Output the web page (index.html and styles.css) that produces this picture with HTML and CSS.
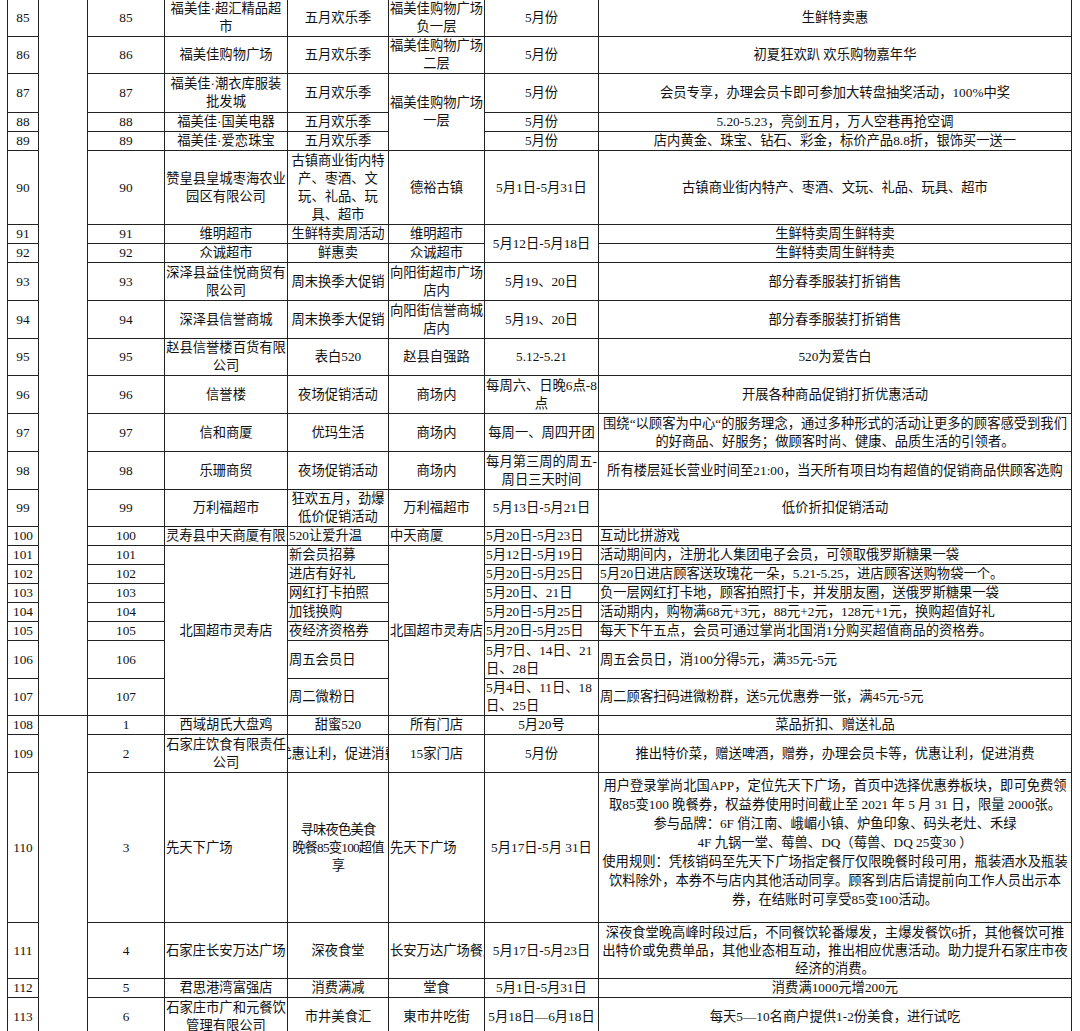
FILE: index.html
```html
<!DOCTYPE html>
<html lang="zh-CN">
<head>
<meta charset="utf-8">
<title>活动表</title>
<link rel="stylesheet" href="styles.css">
</head>
<body>
<table class="sheet">
<colgroup>
<col class="c1"><col class="c2"><col class="c3"><col class="c4"><col class="c5"><col class="c6"><col class="c7"><col class="c8">
</colgroup>
<tbody>
<tr class="h37"><td>85</td><td rowspan="23"></td><td>85</td><td>福美佳·超汇精品超<br>市</td><td>五月欢乐季</td><td>福美佳购物广场<br>负一层</td><td>5月份</td><td>生鲜特卖惠</td></tr>
<tr class="h37"><td>86</td><td>86</td><td>福美佳购物广场</td><td>五月欢乐季</td><td>福美佳购物广场<br>二层</td><td>5月份</td><td>初夏狂欢趴 欢乐购物嘉年华</td></tr>
<tr class="h39"><td>87</td><td>87</td><td>福美佳·潮衣库服装<br>批发城</td><td>五月欢乐季</td><td rowspan="3">福美佳购物广场<br>一层</td><td>5月份</td><td>会员专享，办理会员卡即可参加大转盘抽奖活动，100%中奖</td></tr>
<tr class="h19"><td>88</td><td>88</td><td>福美佳·国美电器</td><td>五月欢乐季</td><td>5月份</td><td>5.20-5.23，亮剑五月，万人空巷再抢空调</td></tr>
<tr class="h19"><td>89</td><td>89</td><td>福美佳·爱恋珠宝</td><td>五月欢乐季</td><td>5月份</td><td>店内黄金、珠宝、钻石、彩金，标价产品8.8折，银饰买一送一</td></tr>
<tr class="h74"><td>90</td><td>90</td><td>赞皇县皇城枣海农业<br>园区有限公司</td><td>古镇商业街内特<br>产、枣酒、文<br>玩、礼品、玩<br>具、超市</td><td>德裕古镇</td><td>5月1日-5月31日</td><td>古镇商业街内特产、枣酒、文玩、礼品、玩具、超市</td></tr>
<tr class="h19"><td>91</td><td>91</td><td>维明超市</td><td>生鲜特卖周活动</td><td>维明超市</td><td rowspan="2">5月12日-5月18日</td><td>生鲜特卖周生鲜特卖</td></tr>
<tr class="h19"><td>92</td><td>92</td><td>众诚超市</td><td>鲜惠卖</td><td>众诚超市</td><td>生鲜特卖周生鲜特卖</td></tr>
<tr class="h38"><td>93</td><td>93</td><td>深泽县益佳悦商贸有<br>限公司</td><td>周末换季大促销</td><td>向阳街超市广场<br>店内</td><td>5月19、20日</td><td>部分春季服装打折销售</td></tr>
<tr class="h38"><td>94</td><td>94</td><td>深泽县信誉商城</td><td>周末换季大促销</td><td>向阳街信誉商城<br>店内</td><td>5月19、20日</td><td>部分春季服装打折销售</td></tr>
<tr class="h37"><td>95</td><td>95</td><td>赵县信誉楼百货有限<br>公司</td><td>表白520</td><td>赵县自强路</td><td>5.12-5.21</td><td>520为爱告白</td></tr>
<tr class="h38"><td>96</td><td>96</td><td>信誉楼</td><td>夜场促销活动</td><td>商场内</td><td>每周六、日晚6点-8<br>点</td><td>开展各种商品促销打折优惠活动</td></tr>
<tr class="h38"><td>97</td><td>97</td><td>信和商厦</td><td>优玛生活</td><td>商场内</td><td>每周一、周四开团</td><td>围绕“以顾客为中心“的服务理念，通过多种形式的活动让更多的顾客感受到我们<br>的好商品、好服务；做顾客时尚、健康、品质生活的引领者。</td></tr>
<tr class="h38"><td>98</td><td>98</td><td>乐珊商贸</td><td>夜场促销活动</td><td>商场内</td><td>每月第三周的周五-<br>周日三天时间</td><td>所有楼层延长营业时间至21:00，当天所有项目均有超值的促销商品供顾客选购</td></tr>
<tr class="h37"><td>99</td><td>99</td><td>万利福超市</td><td>狂欢五月，劲爆<br>低价促销活动</td><td>万利福超市</td><td>5月13日-5月21日</td><td>低价折扣促销活动</td></tr>
<tr class="h19"><td>100</td><td>100</td><td class="l">灵寿县中天商厦有限公司</td><td class="l">520让爱升温</td><td class="l">中天商厦</td><td class="l">5月20日-5月23日</td><td class="l">互动比拼游戏</td></tr>
<tr class="h19"><td>101</td><td>101</td><td rowspan="7">北国超市灵寿店</td><td class="l">新会员招募</td><td rowspan="7">北国超市灵寿店</td><td class="l">5月12日-5月19日</td><td class="l">活动期间内，注册北人集团电子会员，可领取俄罗斯糖果一袋</td></tr>
<tr class="h19"><td>102</td><td>102</td><td class="l">进店有好礼</td><td class="l">5月20日-5月25日</td><td class="l">5月20日进店顾客送玫瑰花一朵，5.21-5.25，进店顾客送购物袋一个。</td></tr>
<tr class="h19"><td>103</td><td>103</td><td class="l">网红打卡拍照</td><td class="l">5月20日、21日</td><td class="l">负一层网红打卡地，顾客拍照打卡，并发朋友圈，送俄罗斯糖果一袋</td></tr>
<tr class="h19"><td>104</td><td>104</td><td class="l">加钱换购</td><td class="l">5月20日-5月25日</td><td class="l">活动期内，购物满68元+3元，88元+2元，128元+1元，换购超值好礼</td></tr>
<tr class="h19"><td>105</td><td>105</td><td class="l">夜经济资格券</td><td class="l">5月20日-5月25日</td><td class="l">每天下午五点，会员可通过掌尚北国消1分购买超值商品的资格券。</td></tr>
<tr class="h38"><td>106</td><td>106</td><td class="l">周五会员日</td><td class="l">5月7日、14日、21<br>日、28日</td><td class="l">周五会员日，消100分得5元，满35元-5元</td></tr>
<tr class="h37"><td>107</td><td>107</td><td class="l">周二微粉日</td><td class="l">5月4日、11日、18<br>日、25日</td><td class="l">周二顾客扫码进微粉群，送5元优惠券一张，满45元-5元</td></tr>
<tr class="h19"><td>108</td><td rowspan="6"></td><td>1</td><td>西域胡氏大盘鸡</td><td>甜蜜520</td><td>所有门店</td><td>5月20号</td><td>菜品折扣、赠送礼品</td></tr>
<tr class="h38"><td>109</td><td>2</td><td>石家庄饮食有限责任<br>公司</td><td><span class="ovc">优惠让利，促进消费</span></td><td>15家门店</td><td>5月份</td><td>推出特价菜，赠送啤酒，赠券，办理会员卡等，优惠让利，促进消费</td></tr>
<tr class="h150"><td>110</td><td>3</td><td class="l">先天下广场</td><td class="tight">寻味夜色美食<br>晚餐85变100超值<br>享</td><td class="l">先天下广场</td><td>5月17日-5月 31日</td><td class="up">用户登录掌尚北国APP，定位先天下广场，首页中选择优惠券板块，即可免费领<br>取85变100 晚餐券，权益券使用时间截止至 2021 年 5 月 31 日，限量 2000张。<br>参与品牌：6F 俏江南、峨嵋小镇、炉鱼印象、码头老灶、禾绿<br>4F 九锅一堂、莓兽、DQ（莓兽、DQ 25变30 ）<br>使用规则：凭核销码至先天下广场指定餐厅仅限晚餐时段可用，瓶装酒水及瓶装<br>饮料除外，本券不与店内其他活动同享。顾客到店后请提前向工作人员出示本<br>券，在结账时可享受85变100活动。</td></tr>
<tr class="h56"><td>111</td><td>4</td><td class="l">石家庄长安万达广场</td><td>深夜食堂</td><td class="l">长安万达广场餐厅</td><td>5月17日-5月23日</td><td>深夜食堂晚高峰时段过后，不同餐饮轮番爆发，主爆发餐饮6折，其他餐饮可推<br>出特价或免费单品，其他业态相互动，推出相应优惠活动。助力提升石家庄市夜<br>经济的消费。</td></tr>
<tr class="h19"><td>112</td><td>5</td><td>君思港湾富强店</td><td>消费满减</td><td>堂食</td><td>5月1日-5月31日</td><td>消费满1000元增200元</td></tr>
<tr class="h38"><td>113</td><td>6</td><td>石家庄市广和元餐饮<br>管理有限公司</td><td>市井美食汇</td><td>東市井吃街</td><td>5月18日—6月18日</td><td>每天5—10名商户提供1-2份美食，进行试吃</td></tr>
</tbody>
</table>
</body>
</html>
```
FILE: styles.css
```css
html, body {
  margin: 0;
  padding: 0;
  background: #ffffff;
}

body {
  font-family: "Liberation Serif", "Noto Sans CJK SC", serif;
  font-size: 13.3px;
  color: #111111;
}

.sheet {
  border-collapse: collapse;
  table-layout: fixed;
  width: 1064px;
  margin: -1px 0 0 7px;
}

.c1 { width: 31px; }
.c2 { width: 49px; }
.c3 { width: 77px; }
.c4 { width: 123px; }
.c5 { width: 101px; }
.c6 { width: 96px; }
.c7 { width: 114px; }
.c8 { width: 473px; }

.sheet td {
  border: 1px solid #222222;
  padding: 0 1px;
  text-align: center;
  vertical-align: middle;
  white-space: nowrap;
  overflow: hidden;
  line-height: 18px;
}

.sheet td.l {
  text-align: left;
}

.sheet td.tight {
  letter-spacing: -0.8px;
}

.sheet td.up {
  line-height: 19px;
  padding-bottom: 10px;
}

.ovc {
  display: inline-block;
  margin: 0 -12px;
}

.h19 { height: 19px; }
.h37 { height: 37px; }
.h38 { height: 38px; }
.h39 { height: 39px; }
.h56 { height: 56px; }
.h74 { height: 74px; }
.h150 { height: 150px; }
```
